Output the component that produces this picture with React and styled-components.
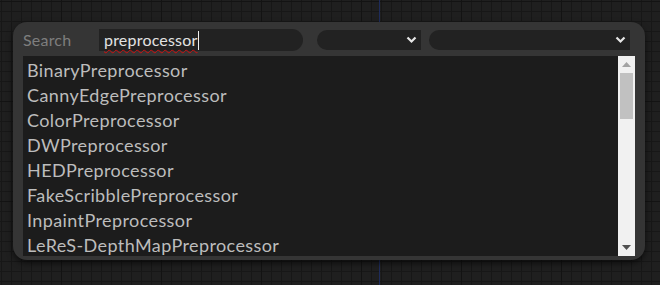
import React from "react";
import styled, { createGlobalStyle } from "styled-components";

const items = [
  "BinaryPreprocessor",
  "CannyEdgePreprocessor",
  "ColorPreprocessor",
  "DWPreprocessor",
  "HEDPreprocessor",
  "FakeScribblePreprocessor",
  "InpaintPreprocessor",
  "LeReS-DepthMapPreprocessor",
];

const GlobalStyle = createGlobalStyle`
  html, body {
    margin: 0;
    padding: 0;
    width: 660px;
    height: 285px;
    overflow: hidden;
    font-family: Lato, "Open Sans", sans-serif;
    background-color: #1f1f1f;
    background-image:
      linear-gradient(to right, #131313 1px, transparent 1px),
      linear-gradient(to bottom, #131313 1px, transparent 1px),
      linear-gradient(to right, #171717 1px, transparent 1px),
      linear-gradient(to bottom, #171717 1px, transparent 1px);
    background-size: 100px 100px, 100px 100px, 10px 10px, 10px 10px;
    background-position: 61px 1px, 61px 1px, 1px 1px, 1px 1px;
  }
`;

const Canvas = styled.div`
  position: relative;
  width: 660px;
  height: 285px;
  padding: 22px 15px 0 13px;
  box-sizing: border-box;
`;

const LinkLine = styled.div`
  position: absolute;
  left: 379px;
  top: 0;
  width: 1px;
  height: 285px;
  background: #1e2c5c;
`;

const Panel = styled.div`
  position: relative;
  width: 632px;
  height: 238px;
  box-sizing: border-box;
  background: #353535;
  border-radius: 14px;
  padding: 7px 10px 4px 10px;
  display: flex;
  flex-direction: column;
  gap: 5px;
  box-shadow: 0 3px 6px rgba(0, 0, 0, 0.6);
`;

const Toolbar = styled.div`
  display: flex;
  align-items: center;
  height: 22px;
  padding-right: 5px;
`;

const Label = styled.span`
  width: 76px;
  font-size: 16px;
  letter-spacing: 0.2px;
  color: #7e7e7e;
  line-height: 22px;
`;

const SearchField = styled.div`
  width: 204px;
  height: 22px;
  background: #222222;
  border-radius: 0 11px 11px 0;
  display: flex;
  align-items: center;
  padding-left: 5px;
  box-sizing: border-box;
  margin-right: 14px;
`;

const Typed = styled.span`
  font-size: 16px;
  letter-spacing: 0.2px;
  color: #e2e2e2;
  line-height: 20px;
  text-decoration: underline wavy #d01010;
  text-decoration-thickness: 1px;
  text-underline-offset: 3px;
`;

const Caret = styled.span`
  width: 1px;
  height: 19px;
  background: #f0f0f0;
`;

const Select = styled.div`
  width: ${(p) => p.$w}px;
  height: 20px;
  margin-left: ${(p) => p.$gap}px;
  background: #222222;
  border-radius: 10px 0 0 10px;
  display: flex;
  align-items: center;
  justify-content: flex-end;
  padding-right: 4px;
  box-sizing: border-box;
`;

const ListArea = styled.div`
  display: flex;
  height: 200px;
  background: #1c1c1c;
`;

const Items = styled.div`
  flex: 1;
  padding-top: 2px;
  overflow: hidden;
`;

const Item = styled.div`
  height: 25px;
  line-height: 25px;
  padding-left: 4px;
  font-size: 18px;
  letter-spacing: 0.4px;
  color: #bdbdbd;
  white-space: nowrap;
`;

const Scrollbar = styled.div`
  width: 17px;
  background: #f1f1f1;
  display: flex;
  flex-direction: column;
`;

const Arrow = styled.div`
  height: 17px;
  display: flex;
  align-items: center;
  justify-content: center;
`;

const Track = styled.div`
  flex: 1;
  padding: 0 2px;
`;

const Thumb = styled.div`
  height: 46px;
  background: #c1c1c1;
`;

const Chevron = () => (
  <svg width="11" height="8" viewBox="0 0 11 8">
    <polyline
      points="1.5,1.5 5.5,5.5 9.5,1.5"
      fill="none"
      stroke="#e6e6e6"
      strokeWidth="2.2"
    />
  </svg>
);

const Tri = ({ up, color }) => (
  <svg width="9" height="5" viewBox="0 0 9 5">
    <polygon points={up ? "4.5,0 9,5 0,5" : "0,0 9,0 4.5,5"} fill={color} />
  </svg>
);

export default function App() {
  return (
    <>
      <GlobalStyle />
      <Canvas>
        <LinkLine />
        <Panel>
          <Toolbar>
            <Label>Search</Label>
            <SearchField>
              <Typed>preprocessor</Typed>
              <Caret />
            </SearchField>
            <Select $w={104} $gap={0}>
              <Chevron />
            </Select>
            <Select $w={201} $gap={8}>
              <Chevron />
            </Select>
          </Toolbar>
          <ListArea>
            <Items>
              {items.map((name) => (
                <Item key={name}>{name}</Item>
              ))}
            </Items>
            <Scrollbar>
              <Arrow>
                <Tri up color="#a3a3a3" />
              </Arrow>
              <Track>
                <Thumb />
              </Track>
              <Arrow>
                <Tri color="#505050" />
              </Arrow>
            </Scrollbar>
          </ListArea>
        </Panel>
      </Canvas>
    </>
  );
}
